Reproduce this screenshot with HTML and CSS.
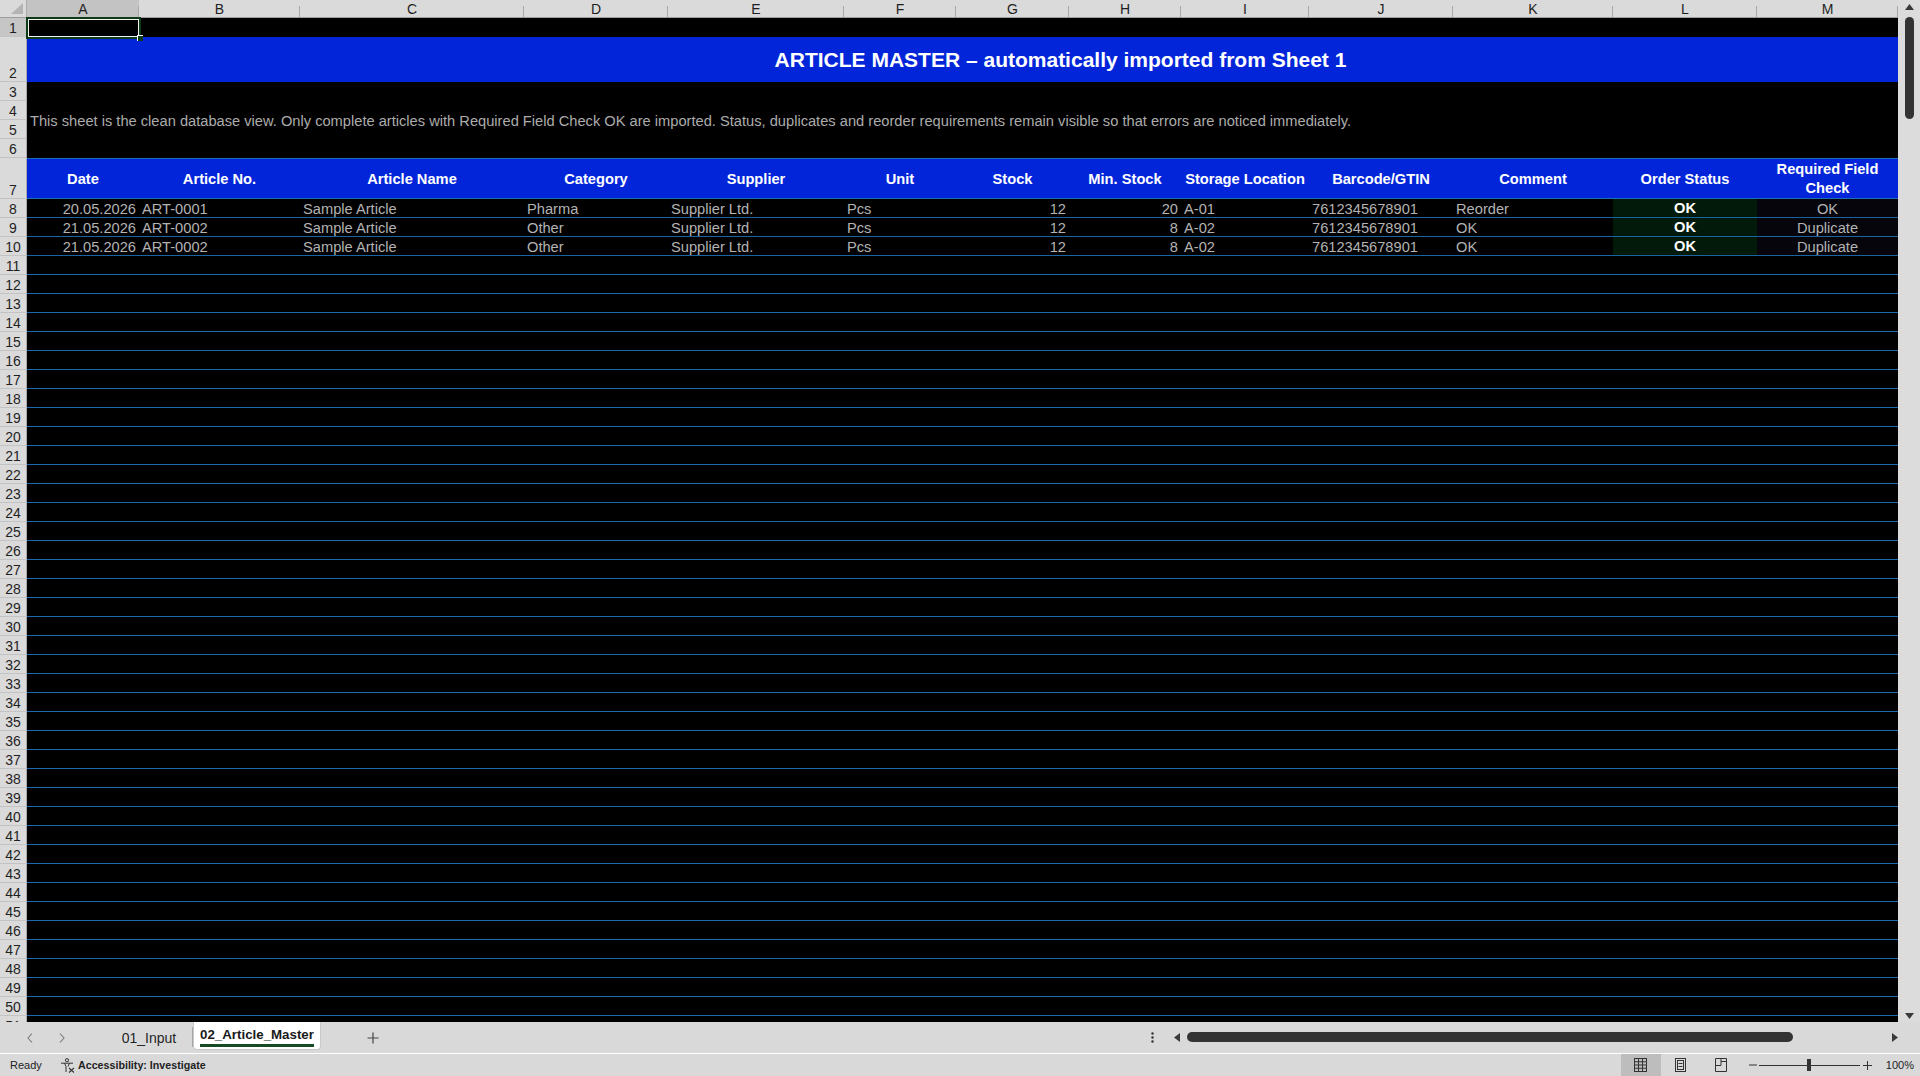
FILE: index.html
```html
<!DOCTYPE html>
<html>
<head>
<meta charset="utf-8">
<title>02_Article_Master</title>
<link rel="stylesheet" href="styles.css">
</head>
<body>
<div class="app">
  <div class="sheet">
    <div class="grid">
      <div class="cells">
        <div class="corner"><svg width="12" height="11" viewBox="0 0 12 11"><polygon points="12,0 12,11 0,11" fill="#b4b4b4"/></svg></div>
        <div class="ch sel">A</div><div class="ch">B</div><div class="ch">C</div><div class="ch">D</div><div class="ch">E</div><div class="ch">F</div><div class="ch">G</div><div class="ch">H</div><div class="ch">I</div><div class="ch">J</div><div class="ch">K</div><div class="ch">L</div><div class="ch">M</div><div class="ch"></div>

        <div class="rh sel">1</div><div class="blank"></div>
        <div class="rh">2</div><div class="title">ARTICLE MASTER – automatically imported from Sheet 1</div>
        <div class="rh">3</div><div class="blank"></div>
        <div class="rh">4</div><div class="desc">This sheet is the clean database view. Only complete articles with Required Field Check OK are imported. Status, duplicates and reorder requirements remain visible so that errors are noticed immediately.</div>
        <div class="rh">5</div>
        <div class="rh">6</div><div class="blank"></div>

        <div class="rh">7</div>
        <div class="hd">Date</div><div class="hd">Article No.</div><div class="hd">Article Name</div><div class="hd">Category</div><div class="hd">Supplier</div><div class="hd">Unit</div><div class="hd">Stock</div><div class="hd">Min. Stock</div><div class="hd">Storage Location</div><div class="hd">Barcode/GTIN</div><div class="hd">Comment</div><div class="hd">Order Status</div><div class="hd wrap">Required Field Check</div><div class="hd"></div>

        <div class="rh">8</div>
        <div class="c r">20.05.2026</div><div class="c">ART-0001</div><div class="c">Sample Article</div><div class="c">Pharma</div><div class="c">Supplier Ltd.</div><div class="c">Pcs</div><div class="c r">12</div><div class="c r">20</div><div class="c">A-01</div><div class="c">7612345678901</div><div class="c">Reorder</div><div class="c ok">OK</div><div class="c ctr m">OK</div><div class="c"></div>

        <div class="rh">9</div>
        <div class="c r">21.05.2026</div><div class="c">ART-0002</div><div class="c">Sample Article</div><div class="c">Other</div><div class="c">Supplier Ltd.</div><div class="c">Pcs</div><div class="c r">12</div><div class="c r">8</div><div class="c">A-02</div><div class="c">7612345678901</div><div class="c">OK</div><div class="c ok">OK</div><div class="c ctr m">Duplicate</div><div class="c"></div>

        <div class="rh">10</div>
        <div class="c r">21.05.2026</div><div class="c">ART-0002</div><div class="c">Sample Article</div><div class="c">Other</div><div class="c">Supplier Ltd.</div><div class="c">Pcs</div><div class="c r">12</div><div class="c r">8</div><div class="c">A-02</div><div class="c">7612345678901</div><div class="c">OK</div><div class="c ok">OK</div><div class="c ctr m">Duplicate</div><div class="c"></div>

        <div class="rh">11</div><div class="e"></div>
        <div class="rh">12</div><div class="e"></div>
        <div class="rh">13</div><div class="e"></div>
        <div class="rh">14</div><div class="e"></div>
        <div class="rh">15</div><div class="e"></div>
        <div class="rh">16</div><div class="e"></div>
        <div class="rh">17</div><div class="e"></div>
        <div class="rh">18</div><div class="e"></div>
        <div class="rh">19</div><div class="e"></div>
        <div class="rh">20</div><div class="e"></div>
        <div class="rh">21</div><div class="e"></div>
        <div class="rh">22</div><div class="e"></div>
        <div class="rh">23</div><div class="e"></div>
        <div class="rh">24</div><div class="e"></div>
        <div class="rh">25</div><div class="e"></div>
        <div class="rh">26</div><div class="e"></div>
        <div class="rh">27</div><div class="e"></div>
        <div class="rh">28</div><div class="e"></div>
        <div class="rh">29</div><div class="e"></div>
        <div class="rh">30</div><div class="e"></div>
        <div class="rh">31</div><div class="e"></div>
        <div class="rh">32</div><div class="e"></div>
        <div class="rh">33</div><div class="e"></div>
        <div class="rh">34</div><div class="e"></div>
        <div class="rh">35</div><div class="e"></div>
        <div class="rh">36</div><div class="e"></div>
        <div class="rh">37</div><div class="e"></div>
        <div class="rh">38</div><div class="e"></div>
        <div class="rh">39</div><div class="e"></div>
        <div class="rh">40</div><div class="e"></div>
        <div class="rh">41</div><div class="e"></div>
        <div class="rh">42</div><div class="e"></div>
        <div class="rh">43</div><div class="e"></div>
        <div class="rh">44</div><div class="e"></div>
        <div class="rh">45</div><div class="e"></div>
        <div class="rh">46</div><div class="e"></div>
        <div class="rh">47</div><div class="e"></div>
        <div class="rh">48</div><div class="e"></div>
        <div class="rh">49</div><div class="e"></div>
        <div class="rh">50</div><div class="e"></div>
        <div class="rh">51</div><div class="e"></div>
      </div>
      <div class="selection"><div class="handle"></div></div>
    </div>
    <div class="vscroll">
      <svg class="arrow" width="9" height="6" viewBox="0 0 9 6"><polygon points="4.5,0 9,6 0,6" fill="#3a3a3a"/></svg>
      <div class="vthumb"></div>
      <div class="vspace"></div>
      <svg class="arrow" width="9" height="6" viewBox="0 0 9 6"><polygon points="0,0 9,0 4.5,6" fill="#3a3a3a"/></svg>
    </div>
  </div>

  <div class="tabbar">
    <div class="navbtn"><svg width="6" height="10" viewBox="0 0 6 10"><polyline points="5,0.5 1,5 5,9.5" fill="none" stroke="#7c7c7c" stroke-width="1.1"/></svg></div>
    <div class="navbtn"><svg width="6" height="10" viewBox="0 0 6 10"><polyline points="1,0.5 5,5 1,9.5" fill="none" stroke="#7c7c7c" stroke-width="1.1"/></svg></div>
    <div class="tab">01_Input</div>
    <div class="tabsep"></div>
    <div class="tab active"><span>02_Article_Master</span></div>
    <div class="addtab"><svg width="12" height="12" viewBox="0 0 12 12"><path d="M6 0.5V11.5M0.5 6H11.5" stroke="#444" stroke-width="1.2"/></svg></div>
    <div class="hgroup">
      <div class="dots"><svg width="3" height="11" viewBox="0 0 3 11"><circle cx="1.5" cy="1.5" r="1.2" fill="#333"/><circle cx="1.5" cy="5.5" r="1.2" fill="#333"/><circle cx="1.5" cy="9.5" r="1.2" fill="#333"/></svg></div>
      <svg class="harrow" width="6" height="9" viewBox="0 0 6 9"><polygon points="6,0 6,9 0,4.5" fill="#3a3a3a"/></svg>
      <div class="htrack"><div class="hthumb"></div></div>
      <svg class="harrow last" width="6" height="9" viewBox="0 0 6 9"><polygon points="0,0 6,4.5 0,9" fill="#3a3a3a"/></svg>
    </div>
  </div>

  <div class="statusbar">
    <span class="ready">Ready</span>
    <svg class="acc" width="15" height="15" viewBox="0 0 15 15"><circle cx="7" cy="2.2" r="1.6" fill="none" stroke="#333" stroke-width="1"/><path d="M1 5.2H13M4.5 5.2L6 8.5V14M9.5 5.2L8 8.5" fill="none" stroke="#333" stroke-width="1"/><path d="M9 10L14 14.5M14 10L9 14.5" stroke="#333" stroke-width="1.1"/></svg>
    <span class="accs">Accessibility: Investigate</span>
    <div class="views">
      <div class="vbtn on"><svg width="13" height="14" viewBox="0 0 13 14"><rect x="0.5" y="0.5" width="12" height="13" fill="none" stroke="#333"/><path d="M4.5 0.5V13.5M8.5 0.5V13.5M0.5 3.75H12.5M0.5 7H12.5M0.5 10.25H12.5" stroke="#333"/></svg></div>
      <div class="vbtn"><svg width="11" height="14" viewBox="0 0 11 14"><rect x="0.5" y="0.5" width="10" height="13" fill="none" stroke="#333"/><rect x="2.5" y="2.5" width="6" height="9" fill="none" stroke="#333"/><path d="M3.5 5.5H7.5M3.5 8.5H7.5" stroke="#333"/></svg></div>
      <div class="vbtn"><svg width="12" height="14" viewBox="0 0 12 14"><path d="M0.5 0.5H11.5V13.5H0.5ZM0.5 7.5H6V0.5M6 3.5H11.5" fill="none" stroke="#333"/></svg></div>
    </div>
    <div class="zoom">
      <svg width="8" height="2" viewBox="0 0 8 2"><path d="M0 1H8" stroke="#333"/></svg>
      <div class="ztrack"><div class="zthumb"></div></div>
      <svg width="9" height="9" viewBox="0 0 9 9"><path d="M4.5 0V9M0 4.5H9" stroke="#333"/></svg>
      <span class="zval">100%</span>
    </div>
  </div>
</div>
</body>
</html>
```
FILE: styles.css
```css
* { box-sizing: border-box; margin: 0; padding: 0; }

body {
  width: 1920px;
  height: 1076px;
  overflow: hidden;
  background: #d9d9d9;
  font-family: "Liberation Sans", Arial, sans-serif;
}

.app {
  display: flex;
  flex-direction: column;
  height: 1076px;
}

.sheet {
  display: flex;
  height: 1022px;
}

.grid {
  position: relative;
  width: 1898px;
  height: 1022px;
  overflow: hidden;
  background: #000;
}

.cells {
  display: grid;
  width: 2094px;
  grid-template-columns: 27px 112px 161px 224px 144px 176px 112px 113px 112px 128px 144px 160px 144px 141px 196px;
  grid-template-rows: 18px 19px 45px 19px 19px 19px 19px 41px repeat(44, 19px);
}

/* headers */
.corner {
  background: #dadada;
  border-right: 1px solid #ababab;
  border-bottom: 1px solid #9d9d9d;
  display: flex;
  align-items: flex-end;
  justify-content: flex-end;
  padding: 0 3px 3px 0;
}

.ch {
  background-color: #dadada;
  background-image: linear-gradient(#a9a9a9, #a9a9a9);
  background-repeat: no-repeat;
  background-position: right bottom;
  background-size: 1px 11px;
  border-bottom: 1px solid #9d9d9d;
  color: #1f1f1f;
  font-size: 14px;
  line-height: 17px;
  padding-top: 1px;
  text-align: center;
  overflow: hidden;
}

.ch.sel {
  background-color: #c3c3c3;
  border-bottom: 1px solid #6e6e6e;
}

.rh {
  background: #dadada;
  border-right: 1px solid #ababab;
  border-bottom: 1px solid #c3c3c3;
  color: #1f1f1f;
  font-size: 14px;
  line-height: 15px;
  display: flex;
  align-items: flex-end;
  justify-content: center;
  overflow: hidden;
}

.rh.sel {
  background: #c6c6c6;
}

/* body */
.blank {
  grid-column: 2 / -1;
}

.title {
  grid-column: 2 / -1;
  background: #0225d9;
  color: #fff;
  font-weight: bold;
  font-size: 21px;
  display: flex;
  align-items: center;
  justify-content: center;
  padding-top: 1px;
}

.desc {
  grid-column: 2 / -1;
  grid-row: span 2;
  color: #acacac;
  font-size: 14.67px;
  display: flex;
  align-items: center;
  padding: 2px 0 0 3px;
  white-space: nowrap;
}

.hd {
  background: #0225d9;
  border-top: 1px solid #1b6bbd;
  border-bottom: 1px solid #1c6db5;
  color: #fff;
  font-weight: bold;
  font-size: 14.67px;
  line-height: 19px;
  display: flex;
  align-items: center;
  justify-content: center;
  text-align: center;
  padding: 2px 1px 0 1px;
  white-space: nowrap;
}

.hd.wrap {
  white-space: normal;
  padding: 1px 6px 0 6px;
}

.c {
  border-bottom: 1px solid #1a64a3;
  color: #b3b3b3;
  font-size: 14.67px;
  line-height: 20px;
  padding: 0 3px;
  white-space: nowrap;
  overflow: hidden;
}

.c.r { text-align: right; }
.c.ctr { text-align: center; }
.c.m { background: #05050b; }

.c.ok {
  background: #021a09;
  color: #fff;
  font-weight: bold;
  text-align: center;
  line-height: 18px;
}

.e {
  grid-column: 2 / -1;
  border-bottom: 1px solid #1c68ad;
}

/* selected cell */
.selection {
  position: absolute;
  left: 26px;
  top: 17px;
  width: 115px;
  height: 22px;
  border: 2px solid #0e3b17;
  box-shadow: inset 0 0 0 1px #f2f2f2;
}

.handle {
  position: absolute;
  right: -4px;
  bottom: -4px;
  width: 6px;
  height: 6px;
  background: #0e3b17;
  border-top: 1px solid #fff;
  border-left: 1px solid #fff;
}

/* vertical scrollbar */
.vscroll {
  width: 22px;
  height: 1022px;
  background: #dcdcdc;
  display: flex;
  flex-direction: column;
  align-items: center;
  padding: 4px 0 3px 0;
}

.vthumb {
  width: 9px;
  height: 102px;
  margin-top: 7px;
  background: #333;
  border-radius: 5px;
}

.vspace { flex: 1; }

/* tab bar */
.tabbar {
  height: 31px;
  display: flex;
  align-items: flex-start;
  background: #d9d9d9;
  padding-left: 14px;
}

.navbtn {
  width: 32px;
  height: 31px;
  display: flex;
  align-items: center;
  justify-content: center;
}

.tab {
  margin-left: 28px;
  width: 86px;
  height: 28px;
  font-size: 14px;
  color: #262626;
  display: flex;
  align-items: center;
  justify-content: center;
  padding-top: 3px;
}

.tabsep {
  width: 1px;
  height: 20px;
  margin-top: 5px;
  background: #a6a6a6;
}

.tab.active {
  margin-left: 0;
  width: 128px;
  background: #fff;
  border-radius: 0 0 4px 4px;
  border: 1px solid #c8c8c8;
  border-top: none;
  font-weight: bold;
  font-size: 13.3px;
  color: #1a1a1a;
  padding-top: 0;
}

.tab.active span {
  border-bottom: 3px solid #154a23;
  padding: 2px 0 1px 0;
  line-height: 16px;
}

.addtab {
  margin-left: 46px;
  height: 31px;
  display: flex;
  align-items: center;
}

.hgroup {
  margin-left: auto;
  height: 31px;
  display: flex;
  align-items: center;
  padding-bottom: 1px;
}

.dots {
  width: 16px;
  display: flex;
  justify-content: center;
  margin-right: 14px;
}

.harrow { flex: none; }

.htrack {
  width: 701px;
  margin-left: 7px;
  margin-right: 4px;
  height: 10px;
}

.hthumb {
  width: 606px;
  height: 10px;
  background: #333;
  border-radius: 5px;
}

.harrow.last {
  margin-right: 22px;
}

/* status bar */
.statusbar {
  height: 23px;
  border-top: 1px solid #fff;
  background: #d9d9d9;
  display: flex;
  align-items: center;
  font-size: 11px;
  color: #222;
}

.ready {
  margin-left: 10px;
  width: 50px;
}

.acc {
  margin-right: 3px;
}

.accs {
  font-weight: bold;
  font-size: 10.7px;
}

.views {
  margin-left: auto;
  height: 22px;
  display: flex;
}

.vbtn {
  width: 40px;
  height: 22px;
  display: flex;
  align-items: center;
  justify-content: center;
}

.vbtn.on {
  background: #bdbdbd;
}

.zoom {
  display: flex;
  align-items: center;
  margin-left: 8px;
  margin-right: 6px;
}

.ztrack {
  width: 101px;
  height: 12px;
  margin: 0 3px 0 2px;
  background: linear-gradient(#333, #333) no-repeat left center / 100% 1px;
  display: flex;
  justify-content: center;
}

.zthumb {
  width: 4px;
  height: 12px;
  background: #333;
}

.zval {
  margin-left: 14px;
  font-size: 11px;
}
```
